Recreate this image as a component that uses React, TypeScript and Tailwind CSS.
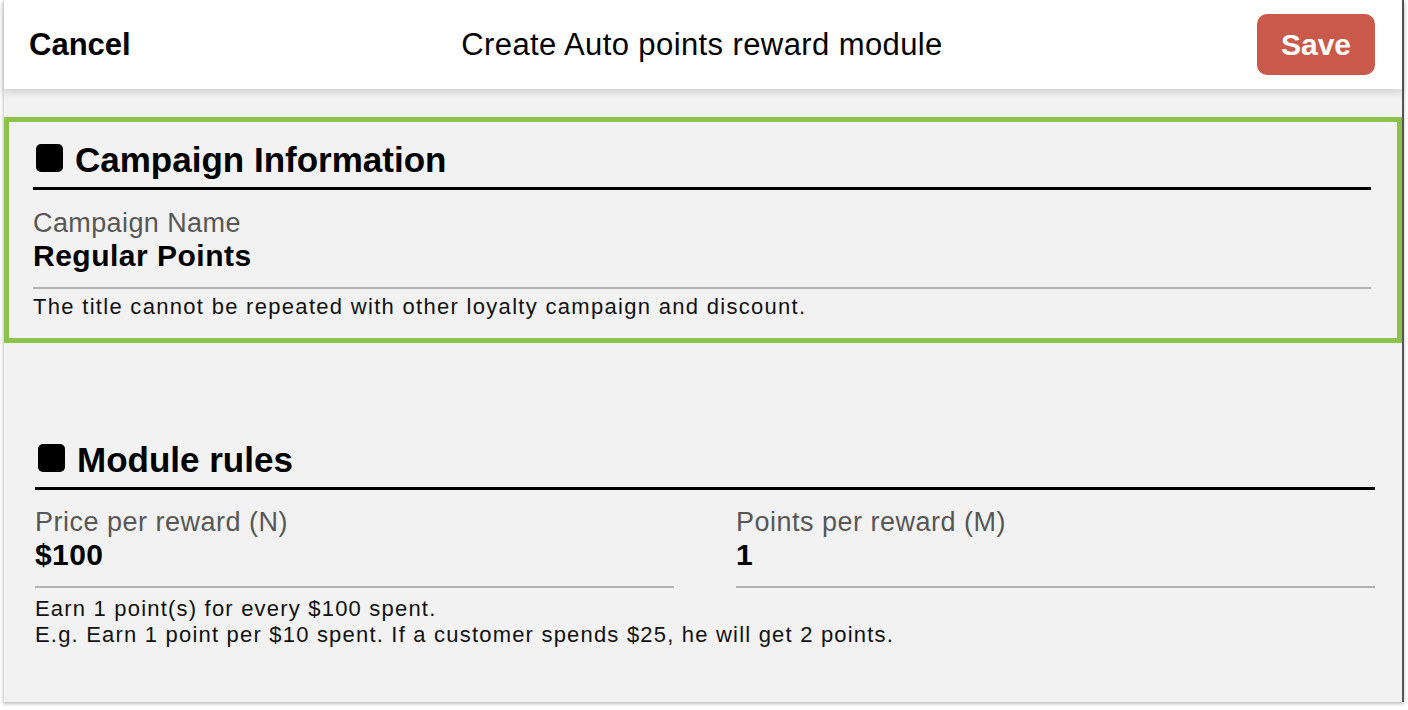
const font = "font-['Liberation_Sans',Arial,sans-serif]";

function SectionTitle({ title }: { title: string }) {
  return (
    <div>
      <div className="flex items-start gap-[12px]">
        <span className="ml-[3px] mt-[4px] h-[28px] w-[27px] shrink-0 rounded-[5px] bg-black" />
        <h2 className="text-[35px] font-bold leading-[40px] text-black">{title}</h2>
      </div>
      <div className="mt-[7px] h-[3px] bg-black" />
    </div>
  );
}

function Field({ label, value }: { label: string; value: string }) {
  return (
    <div>
      <p className="mt-[16px] text-[27px] leading-[32px] tracking-[0.5px] text-[#575757]">{label}</p>
      <p className="text-[30px] font-bold leading-[34px] tracking-[0.4px] text-black">{value}</p>
      <div className="mt-[14px] h-[2px] bg-[#b3b3b3]" />
    </div>
  );
}

export default function App() {
  return (
    <div className={`h-[710px] w-[1408px] overflow-hidden bg-white ${font}`}>
      <div className="ml-[3px] flex h-[702px] w-[1401px] flex-col border-l border-r-[2px] border-l-[#dcdcdc] border-r-[#555] bg-[#f2f2f2] shadow-[0_2px_3px_rgba(0,0,0,0.25)]">

        {/* Header */}
        <header className="relative z-10 grid h-[89px] shrink-0 grid-cols-[1fr_auto_1fr] items-center bg-white pl-[25px] pr-[27px] shadow-[0_3px_8px_rgba(0,0,0,0.16)]">
          <button className="justify-self-start text-[31px] font-bold leading-[36px] text-black">Cancel</button>
          <h1 className="text-[31px] leading-[36px] tracking-[0.4px] text-black">Create Auto points reward module</h1>
          <button className="h-[61px] w-[118px] justify-self-end rounded-[10px] bg-[#c95a4b] text-[30px] font-bold leading-[36px] text-white">
            Save
          </button>
        </header>

        {/* Campaign Information */}
        <section className="mt-[28px] border-[5px] border-[#8bc34a] pb-[18px] pl-[24px] pr-[26px] pt-[18px]">
          <SectionTitle title="Campaign Information" />
          <p className="mt-[17px] text-[27px] leading-[32px] tracking-[0.4px] text-[#575757]">Campaign Name</p>
          <p className="text-[30px] font-bold leading-[34px] tracking-[0.5px] text-black">Regular Points</p>
          <div className="mt-[14px] h-[2px] bg-[#b3b3b3]" />
          <p className="mt-[5px] text-[22px] leading-[26px] tracking-[1.3px] text-[#111]">
            The title cannot be repeated with other loyalty campaign and discount.
          </p>
        </section>

        {/* Module rules */}
        <section className="mt-[97px] pl-[31px] pr-[27px]">
          <SectionTitle title="Module rules" />
          <div className="grid grid-cols-2 gap-[62px]">
            <Field label="Price per reward (N)" value="$100" />
            <Field label="Points per reward (M)" value="1" />
          </div>
          <div className="mt-[8px] text-[22px] leading-[26px] tracking-[1.2px] text-[#111]">
            <p>Earn 1 point(s) for every $100 spent.</p>
            <p>E.g. Earn 1 point per $10 spent. If a customer spends $25, he will get 2 points.</p>
          </div>
        </section>

      </div>
    </div>
  );
}
